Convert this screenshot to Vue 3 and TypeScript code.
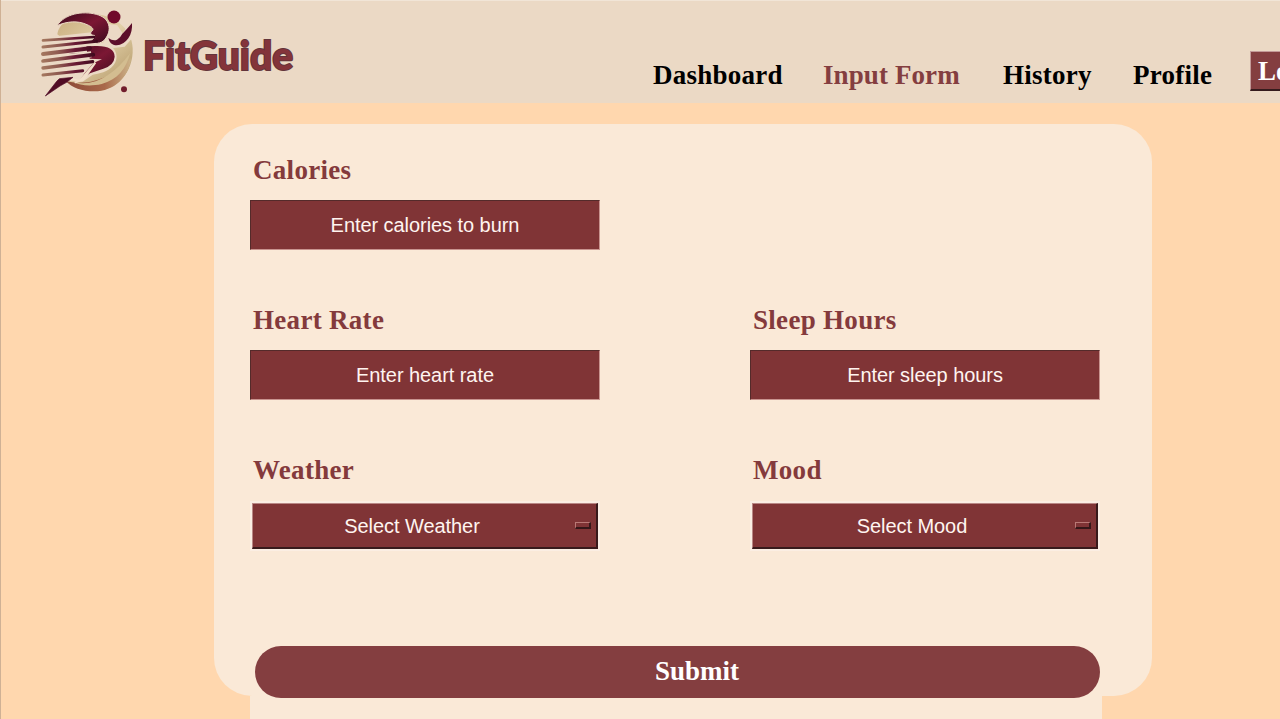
<script setup lang="ts">
interface Field {
  label: string
  text: string
  kind: 'entry' | 'menu'
}

const links = [
  { name: 'Dashboard', cls: 'dashboard' },
  { name: 'Input Form', cls: 'form active' },
  { name: 'History', cls: 'history' },
  { name: 'Profile', cls: 'profile' },
]

const rows: Field[][] = [
  [{ label: 'Calories', text: 'Enter calories to burn', kind: 'entry' }],
  [
    { label: 'Heart Rate', text: 'Enter heart rate', kind: 'entry' },
    { label: 'Sleep Hours', text: 'Enter sleep hours', kind: 'entry' },
  ],
  [
    { label: 'Weather', text: 'Select Weather', kind: 'menu' },
    { label: 'Mood', text: 'Select Mood', kind: 'menu' },
  ],
]
</script>

<template>
  <div class="window">
    <header class="bar">
      <svg class="mark" viewBox="0 0 360 330" aria-hidden="true">
        <defs>
          <linearGradient id="disc" x1="0" y1="0" x2="0.8" y2="1">
            <stop offset="0" stop-color="#c9ac7c" />
            <stop offset="0.5" stop-color="#e2d0a8" />
            <stop offset="1" stop-color="#b59a6a" />
          </linearGradient>
          <linearGradient id="rim" x1="0" y1="0" x2="1" y2="0">
            <stop offset="0" stop-color="#8d4a38" />
            <stop offset="0.6" stop-color="#a9694a" />
            <stop offset="1" stop-color="#cdb489" />
          </linearGradient>
          <linearGradient id="wine" x1="0" y1="0" x2="1" y2="1">
            <stop offset="0" stop-color="#3a0a1c" />
            <stop offset="0.5" stop-color="#7c1734" />
            <stop offset="1" stop-color="#3c0a1d" />
          </linearGradient>
          <linearGradient id="streak" gradientUnits="userSpaceOnUse" x1="36" y1="0" x2="200" y2="0">
            <stop offset="0" stop-color="#a5785f" />
            <stop offset="0.3" stop-color="#8f5a50" />
            <stop offset="0.6" stop-color="#6a1a34" />
            <stop offset="1" stop-color="#3b081b" />
          </linearGradient>
        </defs>
        <path d="M82 103C88 68 125 42 178 43C240 38 306 78 308 145C311 216 260 273 193 273C157 273 130 262 113 240L160 170Z" fill="url(#disc)" />
        <path d="M106 243C185 262 255 226 303 174C297 232 252 274 193 274C155 274 127 263 106 243Z" fill="url(#rim)" />
        <path d="M130 246C190 262 250 228 300 160C290 205 262 240 215 252C180 260 150 256 130 246Z" fill="#d3bd90" />
        <path d="M236 72L262 76L278 100L300 68L314 70L309 112L284 140L250 144L222 132L214 113L222 82Z" fill="#ebd9c5" />
        <path d="M36 113L185 97L208 126L233 131C259 145 268 172 251 195C234 218 206 220 188 224L158 245L119 243L36 234Z" fill="#ebd9c5" />
        <path d="M81 77C105 41 157 32 199 43C240 53 248 91 224 119C212 132 196 133 184 121L194 112L193 106C185 106 178 101 185 94C194 88 186 80 171 74C143 61 111 64 81 77Z" fill="url(#wine)" stroke="#ebd9c5" stroke-width="3" />
        <path d="M235 114Q249 124 261 119Q272 112 277 101Q288 91 306 69Q308 96 295 115Q277 140 252 135Q239 131 235 114Z" fill="#5d0f2b" />
        <circle cx="252" cy="51" r="19.5" fill="#700a2b" />
        <path d="M110 149Q150 138 196 138Q253 136 254 170Q252 196 220 206L180 220L150 240L164 220L190 190Q204 183 216 178L178 176L170 158L112 162Z" fill="url(#wine)" />
        <g fill="none" stroke="#ebd9c5" stroke-width="18">
          <path d="M60 159L170 147M60 180L184 163M60 202L180 182" />
        </g>
        <g fill="none" stroke="url(#streak)" stroke-linecap="round">
          <path d="M39 121L192 111" stroke-width="8" />
          <path d="M39 141L200 124" stroke-width="9" />
          <path d="M39 162L180 145" stroke-width="12" />
          <path d="M39 183L190 164" stroke-width="11" />
          <path d="M39 204L188 185" stroke-width="10" />
          <path d="M39 225L158 212" stroke-width="9" />
        </g>
        <path d="M120 236L149 243L196 188L160 239L134 248" fill="none" stroke="#f1dfc9" stroke-width="6" />
        <path d="M88 236L129 232Q112 248 90 258L46 288L80 244Z" fill="#500c25" stroke="#500c25" stroke-width="2" />
        <circle cx="282" cy="268" r="9" fill="#711d2c" />
      </svg>
      <svg class="brand" viewBox="0 0 156 50">
        <text x="2" y="37" textLength="150" lengthAdjust="spacingAndGlyphs">FitGuide</text>
      </svg>
      <nav class="nav">
        <span v-for="l in links" :key="l.name" class="link" :class="l.cls">{{ l.name }}</span>
      </nav>
      <button class="logout">Logout</button>
    </header>

    <main class="body">
      <section class="card">
        <div v-for="(row, i) in rows" :key="i" class="row">
          <div v-for="f in row" :key="f.label" class="field">
            <div class="label">{{ f.label }}</div>
            <div class="control" :class="f.kind">
              <span class="value">{{ f.text }}</span>
              <i v-if="f.kind === 'menu'" class="indicator"></i>
            </div>
          </div>
        </div>
        <button class="submit">Submit</button>
      </section>
      <div class="tail"></div>
    </main>
  </div>
</template>

<style>
body {
  overflow: hidden;
}
</style>

<style scoped>
.window {
  box-sizing: border-box;
  width: 1280px;
  height: 719px;
  overflow: hidden;
  background: #ffd7ae;
  font-family: "Liberation Serif", "Times New Roman", serif;
  border-left: 1px solid #cfb195;
}
.bar {
  box-sizing: border-box;
  display: flex;
  align-items: flex-start;
  width: 1279px;
  height: 103px;
  overflow: hidden;
  background: #ebd9c5;
  border-top: 1px solid #f1e5d7;
}
.mark {
  flex: none;
  width: 120px;
  height: 110px;
  margin: -1px 0 0 29px;
}
.brand {
  flex: none;
  width: 156px;
  height: 50px;
  margin: 32px 0 0 -9px;
}
.brand text {
  font-family: Lato, "Open Sans", sans-serif;
  font-weight: 900;
  font-size: 39px;
  fill: #84343a;
  stroke: #63343a;
  stroke-width: 2px;
  paint-order: stroke;
}
.nav {
  flex: none;
  display: flex;
  margin: 59px 0 0 356px;
  font-size: 27px;
  line-height: 31px;
  font-weight: bold;
  letter-spacing: 0.25px;
  color: #000;
}
.link {
  flex: none;
  white-space: nowrap;
}
.dashboard {
  width: 170px;
}
.form {
  width: 180px;
  letter-spacing: 0.1px;
}
.history {
  width: 130px;
}
.profile {
  width: 117px;
}
.active {
  color: #843e40;
}
.logout {
  flex: none;
  height: 40px;
  width: 104px;
  margin-top: 50px;
  padding: 0 0 0 7px;
  text-align: left;
  border-style: solid;
  border-width: 1px 2px 2px 1px;
  border-color: #c39a98 #351b1d #351b1d #c39a98;
  background: #843e40;
  color: #fff;
  font: bold 27px/36px "Liberation Serif", serif;
}
.body {
  display: flex;
  flex-direction: column;
  padding: 21px 0 0 213px;
}
.card {
  position: relative;
  box-sizing: border-box;
  width: 938px;
  height: 572px;
  padding: 27px 36px 0;
  border-radius: 38px;
  background: #fae9d7;
  z-index: 1;
}
.row {
  display: flex;
  gap: 150px;
  height: 150px;
}
.field {
  width: 350px;
}
.label {
  height: 49px;
  padding-left: 3px;
  font-size: 27px;
  line-height: 38px;
  font-weight: bold;
  letter-spacing: 0.3px;
  color: #843a3c;
}
.control {
  box-sizing: border-box;
  display: flex;
  align-items: center;
  justify-content: center;
  color: #fff4f0;
  background: #803436;
  font: 20px "Liberation Sans", Arial, sans-serif;
  letter-spacing: -0.06px;
}
.entry {
  height: 50px;
  padding-top: 1px;
  border: 1px solid;
  border-color: #542a2a #c99490 #c99490 #542a2a;
}
.menu {
  width: 346px;
  height: 46px;
  margin: 3px 0 0 2px;
  border-style: solid;
  border-width: 1px 2px 2px 1px;
  border-color: #b98785 #381a1c #381a1c #b98785;
  box-shadow: 0 0 0 2px #fbeee3;
}
.menu .value {
  flex: 1;
  padding: 1px 4px 0 0;
  text-align: center;
}
.indicator {
  box-sizing: border-box;
  width: 16px;
  height: 7px;
  margin-right: 5px;
  border-style: solid;
  border-width: 1px 2px 2px 1px;
  border-color: #b97976 #351719 #351719 #b97976;
}
.submit {
  display: block;
  width: 845px;
  height: 52px;
  margin: 45px 0 0 5px;
  padding: 0 0 1px 39px;
  border: 0;
  border-radius: 26px;
  background: #843e40;
  color: #fff;
  font: bold 27px "Liberation Serif", serif;
}
.tail {
  width: 852px;
  height: 23px;
  margin-left: 36px;
  background: #fae9d7;
}
</style>
